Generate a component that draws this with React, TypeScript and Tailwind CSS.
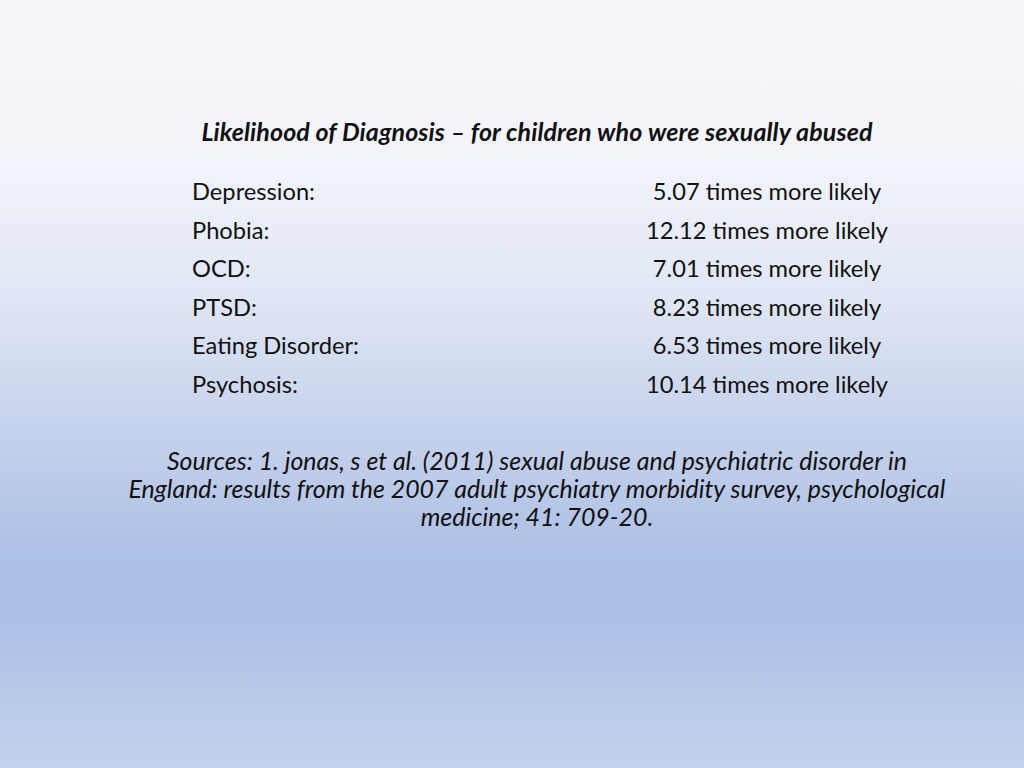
const rows = [
  ['Depression:', '5.07 times more likely'],
  ['Phobia:', '12.12 times more likely'],
  ['OCD:', '7.01 times more likely'],
  ['PTSD:', '8.23 times more likely'],
  ['Eating Disorder:', '6.53 times more likely'],
  ['Psychosis:', '10.14 times more likely'],
];

export default function App() {
  return (
    <div
      className="w-[1024px] h-[768px] overflow-hidden text-[#111] bg-[linear-gradient(to_bottom,#f6f7fc_0%,#f3f5fb_20%,#dfe6f4_39%,#c3d0eb_58%,#adc0e5_72%,#abbfe5_80%,#c5d2ed_100%)]"
      style={{ fontFamily: 'Lato, "Open Sans", sans-serif' }}
    >
      <div className="pt-[116px] flex flex-col items-center">
        <h1 className="ml-[50px] text-[25px] leading-[30px] font-bold italic tracking-[0.1px]">
          Likelihood of Diagnosis – for children who were sexually abused
        </h1>
        <div className="mt-[27px] w-full flex flex-col">
          {rows.map(([label, value]) => (
            <div key={label} className="flex h-[38.5px] items-center text-[23.7px]">
              <div className="w-[455px] shrink-0 pl-[192px]">{label}</div>
              <div className="w-[400px] shrink-0 ml-[112px] text-center">{value}</div>
            </div>
          ))}
        </div>
        <p className="mt-[42px] ml-[50px] w-[900px] text-center italic text-[24.9px] leading-[28px] whitespace-nowrap">
          Sources: 1. jonas, s et al. (2011) sexual abuse and psychiatric disorder in
          <br />
          England: results from the 2007 adult psychiatry morbidity survey, psychological
          <br />
          medicine; 41: 709-20.
        </p>
      </div>
    </div>
  );
}
